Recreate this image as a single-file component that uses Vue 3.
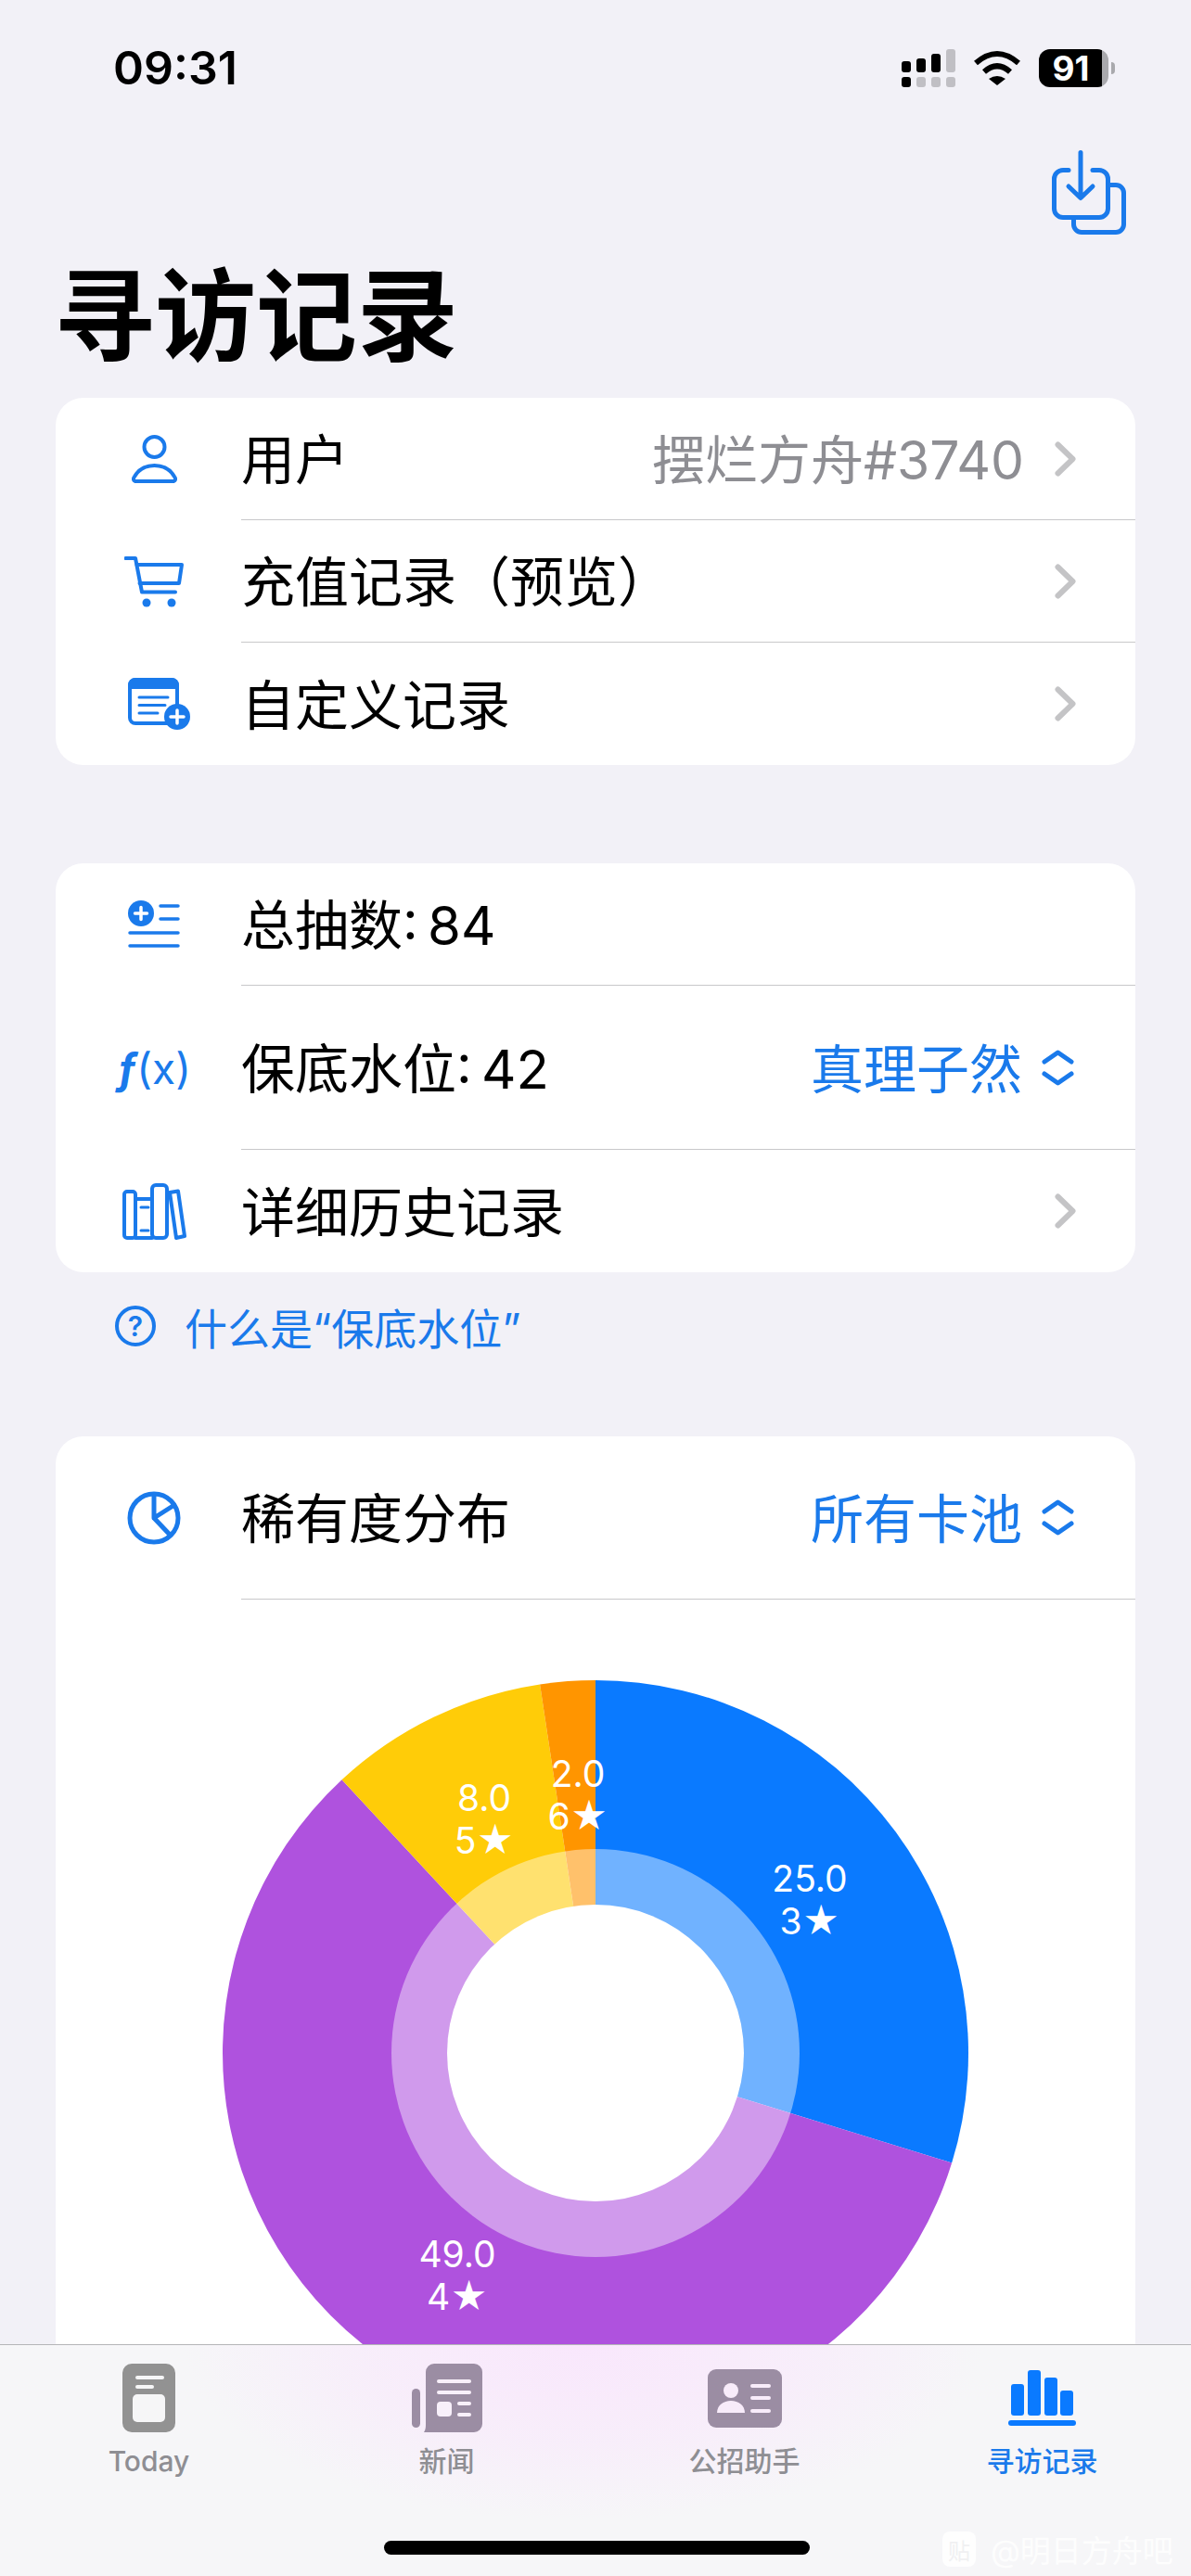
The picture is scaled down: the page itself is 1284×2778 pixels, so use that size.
<template>
  <main class="app">
    <header class="status-bar">
      <span class="time">09:31</span>
      <div class="status-icons">
        <svg width="58" height="41" viewBox="0 0 58 41">
          <rect x="0" y="13" width="10" height="12" rx="3" fill="#000" />
          <rect x="16" y="10" width="10" height="15" rx="3" fill="#000" />
          <rect x="32" y="5" width="10" height="20" rx="3" fill="#000" />
          <rect x="48" y="0" width="10" height="25" rx="3" fill="#c0bfc4" />
          <rect x="0" y="30" width="10" height="11" rx="3" fill="#000" />
          <rect x="16" y="30" width="10" height="11" rx="3" fill="#c0bfc4" />
          <rect x="32" y="30" width="10" height="11" rx="3" fill="#c0bfc4" />
          <rect x="48" y="30" width="10" height="11" rx="3" fill="#c0bfc4" />
        </svg>
        <svg width="50" height="38" viewBox="0 0 50 38" fill="none" stroke="#000" stroke-width="6">
          <path d="M2 14 Q25 -6 48 14" />
          <path d="M11 23.5 Q25 11 39 23.5" />
          <path d="M16 31 Q25 25 34 31 L25 38 Z" fill="#000" stroke="none" />
        </svg>
        <div class="battery">91</div>
      </div>
    </header>

    <div class="top-action">
      <svg width="80" height="91" viewBox="0 0 80 91" fill="none" stroke="#1a7aeb" stroke-width="5" stroke-linecap="round" stroke-linejoin="round">
        <path d="M18 21.5 H12 a9.5 9.5 0 0 0 -9.5 9.5 V63 a9.5 9.5 0 0 0 9.5 9.5 H51 a9.5 9.5 0 0 0 9.5 -9.5 V31 a9.5 9.5 0 0 0 -9.5 -9.5 H44" />
        <path d="M60.5 37.5 H69 a8.5 8.5 0 0 1 8.5 8.5 V80 a8.5 8.5 0 0 1 -8.5 8.5 H32 a8.5 8.5 0 0 1 -8.5 -8.5 V72.5" />
        <path d="M31 2.5 V51 M18 39 L31 51.5 L44 39" />
      </svg>
    </div>

    <h1 class="title">寻访记录</h1>

    <section class="card">
      <div class="row">
        <div class="row-icon">
          <svg width="49" height="52" viewBox="0 0 49 52" fill="none" stroke="#1a7aeb" stroke-width="4">
            <circle cx="24.5" cy="13" r="11" />
            <path d="M5 50 C2 50 1 47.500 3 45 C7.500 37 15 33 24.500 33 C34 33 41.500 37 46 45 C48 47.500 47 50 44 50 Z" />
          </svg>
        </div>
        <div class="row-body">
          <span class="label">用户</span>
          <span class="value">摆烂方舟#3740</span>
          <svg class="chevron" width="23" height="38" viewBox="0 0 23 38" fill="none"><path d="M3.500 3.500 L19.500 19 L3.500 34.500" /></svg>
        </div>
      </div>
      <div class="row">
        <div class="row-icon">
          <svg width="64" height="55" viewBox="0 0 64 55" fill="none" stroke="#1a7aeb" stroke-width="4" stroke-linecap="round" stroke-linejoin="round">
            <path d="M1.500 2 H12 L19 38.500 H55" />
            <path d="M13.500 9 H62 L59 29 H16.500" />
            <circle cx="24" cy="50" r="4.500" fill="#1a7aeb" stroke="none" />
            <circle cx="51" cy="50" r="4.500" fill="#1a7aeb" stroke="none" />
          </svg>
        </div>
        <div class="row-body">
          <span class="label">充值记录（预览）</span>
          <svg class="chevron" width="23" height="38" viewBox="0 0 23 38" fill="none"><path d="M3.500 3.500 L19.500 19 L3.500 34.500" /></svg>
        </div>
      </div>
      <div class="row">
        <div class="row-icon">
          <svg class="icon-doc" width="68" height="57" viewBox="0 0 68 57">
            <path d="M8 2 H47 a6 6 0 0 1 6 6 V43 a6 6 0 0 1 -6 6 H8 a6 6 0 0 1 -6 -6 V8 a6 6 0 0 1 6 -6 Z" fill="none" stroke="#1a7aeb" stroke-width="4" />
            <path d="M8 0 H47 a8 8 0 0 1 8 8 V12 H0 V8 a8 8 0 0 1 8 -8 Z" fill="#1a7aeb" />
            <path d="M12 21 H43 M12 29.500 H40 M12 38 H32" stroke="#1a7aeb" stroke-width="3" stroke-linecap="round" />
            <circle cx="53" cy="42" r="14" fill="#1a7aeb" />
            <path d="M53 35 V49 M46 42 H60" stroke="#fff" stroke-width="3.500" stroke-linecap="round" />
          </svg>
        </div>
        <div class="row-body last">
          <span class="label">自定义记录</span>
          <svg class="chevron" width="23" height="38" viewBox="0 0 23 38" fill="none"><path d="M3.500 3.500 L19.500 19 L3.500 34.500" /></svg>
        </div>
      </div>
    </section>

    <section class="card card-stats">
      <div class="row">
        <div class="row-icon">
          <svg width="56" height="52" viewBox="0 0 56 52" stroke="#1a7aeb" stroke-width="3.500" stroke-linecap="round">
            <circle cx="14" cy="14" r="14" fill="#1a7aeb" stroke="none" />
            <path d="M14 7.500 V20.500 M7.500 14 H20.500" stroke="#fff" />
            <path d="M35 6 H54 M35 20 H54 M2 35 H54 M2 49 H54" />
          </svg>
        </div>
        <div class="row-body">
          <span class="label">总抽数: 84</span>
        </div>
      </div>
      <div class="row row-tall">
        <div class="row-icon">
          <span class="fx"><i>ƒ</i>(x)</span>
        </div>
        <div class="row-body">
          <span class="label">保底水位: 42</span>
          <span class="picker">真理子然</span>
          <svg class="updown" width="35" height="39" viewBox="0 0 35 39" fill="none"><path d="M3 13 L17.500 3 L32 13 M3 26 L17.500 36 L32 26" /></svg>
        </div>
      </div>
      <div class="row">
        <div class="row-icon">
          <svg width="69" height="61" viewBox="0 0 69 61" fill="none" stroke="#1a7aeb" stroke-width="4" stroke-linejoin="round" stroke-linecap="round">
            <rect x="2" y="9" width="12" height="50" rx="3" />
            <path d="M14 17 H32 M14 59 H32" />
            <rect x="32" y="2" width="16" height="57" rx="4" />
            <path d="M51 10 L60 8.500 L67 57 L58 59 Z" />
            <path d="M20 26 H28 M20 51 H28" stroke-width="3" />
          </svg>
        </div>
        <div class="row-body last">
          <span class="label">详细历史记录</span>
          <svg class="chevron" width="23" height="38" viewBox="0 0 23 38" fill="none"><path d="M3.500 3.500 L19.500 19 L3.500 34.500" /></svg>
        </div>
      </div>
    </section>

    <div class="footnote">
      <span class="help">?</span>
      <span>什么是“保底水位”</span>
    </div>

    <section class="card card-chart">
      <div class="row row-chart">
        <div class="row-icon">
          <svg width="58" height="58" viewBox="0 0 58 58" fill="none" stroke="#1a7aeb" stroke-width="5" stroke-linejoin="round">
            <circle cx="29" cy="29" r="26" />
            <path d="M29 3 V29 L51 15 M29 29 L47 48" />
          </svg>
        </div>
        <div class="row-body">
          <span class="label">稀有度分布</span>
          <span class="picker">所有卡池</span>
          <svg class="updown" width="35" height="39" viewBox="0 0 35 39" fill="none"><path d="M3 13 L17.500 3 L32 13 M3 26 L17.500 36 L32 26" /></svg>
        </div>
      </div>
      <div class="chart">
        <svg width="804" height="804" viewBox="-402 -402 804 804">
          <path v-for="s in slices" :key="s.star" :d="s.path" :fill="s.color" />
          <circle r="220" fill="#fff" fill-opacity="0.42" />
          <circle r="160" fill="#fff" />
          <g v-for="s in slices" :key="s.star" class="chart-label">
            <text :x="s.x" :y="s.y + 14">{{ s.count.toFixed(1) }}</text>
            <text :x="s.x" :y="s.y + 60">{{ s.star }}★</text>
          </g>
        </svg>
      </div>
    </section>

    <nav class="tabbar">
      <div class="tab">
        <div class="tab-icon">
          <svg width="57" height="74" viewBox="0 0 57 74">
            <rect width="57" height="74" rx="10" fill="#929292" />
            <rect x="14" y="13" width="31" height="4" rx="2" fill="#f6f6f7" />
            <rect x="14" y="23" width="20" height="4" rx="2" fill="#f6f6f7" />
            <rect x="11" y="33" width="35" height="30" rx="5" fill="#f6f6f7" />
          </svg>
        </div>
        <span>Today</span>
      </div>
      <div class="tab">
        <div class="tab-icon">
          <svg width="76" height="74" viewBox="0 0 76 74">
            <rect x="0" y="27" width="9" height="42" rx="4.500" fill="#9b8da3" />
            <path d="M24 0 H67 a9 9 0 0 1 9 9 V65 a9 9 0 0 1 -9 9 H13 C15 71 15 68 15 65 V9 a9 9 0 0 1 9 -9 Z" fill="#9b8da3" />
            <rect x="27" y="17" width="37" height="4" rx="2" fill="#f8f0fa" />
            <rect x="27" y="29" width="37" height="4" rx="2" fill="#f8f0fa" />
            <rect x="27" y="41" width="16" height="16" rx="4" fill="#f8f0fa" />
            <rect x="49" y="41" width="15" height="4" rx="2" fill="#f8f0fa" />
            <rect x="49" y="53" width="15" height="4" rx="2" fill="#f8f0fa" />
          </svg>
        </div>
        <span>新闻</span>
      </div>
      <div class="tab">
        <div class="tab-icon">
          <svg width="80" height="63" viewBox="0 0 80 63">
            <rect width="80" height="63" rx="9" fill="#9b8da3" />
            <circle cx="25" cy="23" r="8" fill="#f8ecfa" />
            <path d="M10 47 C10 39 17 34 25 34 C33 34 40 39 40 47 Z" fill="#f8ecfa" />
            <rect x="46" y="16" width="22" height="4" rx="2" fill="#f8ecfa" />
            <rect x="46" y="29" width="22" height="4" rx="2" fill="#f8ecfa" />
            <rect x="46" y="43" width="22" height="4" rx="2" fill="#f8ecfa" />
          </svg>
        </div>
        <span>公招助手</span>
      </div>
      <div class="tab active">
        <div class="tab-icon">
          <svg width="73" height="60" viewBox="0 0 73 60" fill="#0a7aff">
            <rect x="3" y="15" width="14" height="34" rx="3" />
            <rect x="21" y="0" width="14" height="49" rx="3" />
            <rect x="39" y="8" width="14" height="41" rx="3" />
            <rect x="56" y="22" width="14" height="27" rx="3" />
            <rect x="0" y="54" width="73" height="6" rx="3" />
          </svg>
        </div>
        <span>寻访记录</span>
      </div>
      <div class="home-bar"></div>
      <div class="watermark">
        <span class="watermark-logo">贴</span>
        <span>@明日方舟吧</span>
      </div>
    </nav>
  </main>
</template>

<script setup>
const R = 402;

const rawSlices = [
  { star: 3, count: 25, color: '#0a7aff', x: 231, y: -188 },
  { star: 4, count: 49, color: '#af52de', x: -149, y: 217 },
  { star: 5, count: 8, color: '#ffcc08', x: -120, y: -275 },
  { star: 6, count: 2, color: '#ff9500', x: -19, y: -301 },
];

const total = rawSlices.reduce((sum, s) => sum + s.count, 0);

const point = (angle) => {
  const rad = (angle - 90) * Math.PI / 180;
  return `${(R * Math.cos(rad)).toFixed(2)} ${(R * Math.sin(rad)).toFixed(2)}`;
};

let start = 0;
const slices = rawSlices.map((s) => {
  const sweep = s.count / total * 360;
  const large = sweep > 180 ? 1 : 0;
  const path = `M0 0 L${point(start)} A${R} ${R} 0 ${large} 1 ${point(start + sweep)} Z`;
  start += sweep;
  return { ...s, path };
});
</script>

<style>
html,
body {
  margin: 0;
  padding: 0;
  background: #f2f1f7;
}
</style>

<style scoped>
.app {
  position: relative;
  width: 1284px;
  height: 2778px;
  overflow: hidden;
  background: #f2f1f7;
  font-family: Inter, "Noto Sans CJK SC", sans-serif;
  color: #000;
}

.status-bar {
  display: flex;
  align-items: center;
  justify-content: space-between;
  height: 146px;
  padding: 0 89px 0 122px;
}

.time {
  font-size: 50px;
  font-weight: 600;
}

.status-icons {
  display: flex;
  align-items: center;
  gap: 20px;
}

.battery {
  position: relative;
  width: 75px;
  height: 41px;
  border-radius: 12px;
  background: linear-gradient(90deg, #000 91%, #a9a9ad 91%);
  color: #fff;
  font-size: 37px;
  font-weight: 700;
  line-height: 41px;
  text-align: center;
  padding-right: 6px;
  box-sizing: border-box;
}

.battery::after {
  content: "";
  position: absolute;
  left: 78px;
  top: 14px;
  width: 4px;
  height: 13px;
  border-radius: 0 6px 6px 0;
  background: #a9a9ad;
}

.top-action {
  display: flex;
  justify-content: flex-end;
  padding: 16px 70px 0 0;
}

.top-action svg {
  display: block;
}

.title {
  margin: 17px 0 32px 58px;
  font-family: "Noto Sans CJK SC", sans-serif;
  font-size: 109px;
  font-weight: 700;
  line-height: 127px;
}

.card {
  margin: 0 60px;
  background: #fff;
  border-radius: 30px;
}

.card-stats {
  margin-top: 106px;
}

.card-chart {
  border-radius: 30px 30px 0 0;
}

.row {
  display: flex;
  height: 132px;
}

.row-tall {
  height: 177px;
}

.row-chart {
  height: 176px;
}

.row-icon {
  display: flex;
  align-items: center;
  justify-content: center;
  flex-shrink: 0;
  width: 212px;
  margin-right: -12px;
}

.icon-doc {
  margin-left: 12px;
}

.row-body {
  flex: 1;
  display: flex;
  align-items: center;
  padding-right: 64px;
  border-bottom: 1.500px solid #c8c8ca;
  font-size: 58px;
  min-width: 0;
}

.row-body.last {
  border-bottom: none;
}

.label {
  flex: 1;
  margin-bottom: 5px;
  word-spacing: -6px;
}

.value {
  margin-bottom: 5px;
  color: #8e8e93;
  font-size: 57px;
}

.picker {
  margin-bottom: 5px;
  color: #1a7aeb;
  font-size: 57px;
}

.chevron {
  flex-shrink: 0;
  margin-left: 33px;
  stroke: #c4c4c6;
  stroke-width: 6;
  stroke-linecap: round;
  stroke-linejoin: round;
}

.updown {
  flex-shrink: 0;
  margin: 0 2px 0 21px;
  stroke: #1a7aeb;
  stroke-width: 5;
  stroke-linecap: round;
  stroke-linejoin: round;
}

.fx {
  color: #1a7aeb;
  font-size: 46px;
  font-weight: 400;
  line-height: 1;
}

.fx i {
  font-weight: 700;
}

.footnote {
  display: flex;
  align-items: center;
  gap: 31px;
  height: 177px;
  padding: 0 0 62px 124px;
  box-sizing: border-box;
  color: #1a7aeb;
  font-size: 46px;
}

.help {
  display: flex;
  align-items: center;
  justify-content: center;
  width: 44px;
  height: 44px;
  box-sizing: border-box;
  border: 4px solid #1a7aeb;
  border-radius: 50%;
  font-size: 30px;
  font-weight: 600;
}

.chart {
  display: flex;
  justify-content: center;
  padding-top: 87px;
}

.chart-label text {
  fill: #fff;
  font-size: 39px;
  text-anchor: middle;
  font-family: Inter, "DejaVu Sans", sans-serif;
}

.tabbar {
  position: absolute;
  left: 0;
  right: 0;
  top: 2528px;
  height: 250px;
  display: grid;
  grid-template-columns: repeat(4, 1fr);
  align-content: start;
  padding-top: 20px;
  box-sizing: border-box;
  border-top: 1.500px solid #b5b5b8;
  background: radial-gradient(ellipse 430px 190px at 49% 0, #f9e7fc 0%, rgba(249, 231, 252, 0.55) 55%, rgba(246, 246, 248, 0) 100%), #f6f6f8;
}

.tab {
  display: flex;
  flex-direction: column;
  align-items: center;
  color: #8e8e93;
  font-size: 30px;
  font-weight: 500;
  line-height: 36px;
}

.tab.active {
  color: #1a7aeb;
}

.tab-icon {
  display: flex;
  align-items: center;
  justify-content: center;
  height: 74px;
  margin-bottom: 13px;
}

.home-bar {
  position: absolute;
  left: 414px;
  top: 211px;
  width: 459px;
  height: 15px;
  border-radius: 8px;
  background: #000;
}

.watermark {
  position: absolute;
  left: 1016px;
  top: 196px;
  display: flex;
  align-items: center;
  gap: 16px;
  color: rgba(255, 255, 255, 0.85);
  font-size: 33px;
  white-space: nowrap;
}

.watermark-logo {
  display: flex;
  align-items: center;
  justify-content: center;
  width: 36px;
  height: 38px;
  border-radius: 8px;
  background: rgba(255, 255, 255, 0.85);
  color: #f0f0f2;
  font-size: 24px;
}
</style>
